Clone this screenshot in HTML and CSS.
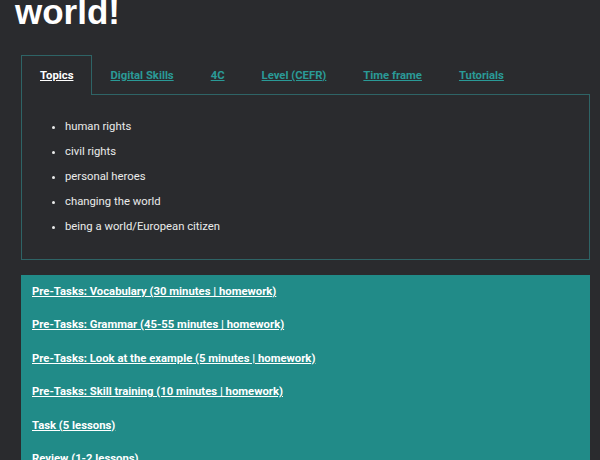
FILE: index.html
```html
<!DOCTYPE html>
<html>
<head>
<meta charset="utf-8">
<link rel="stylesheet" href="styles.css">
</head>
<body>
<div class="page">
  <h1 class="title">world!</h1>
  <div class="tabs">
    <ul class="tab-nav">
      <li class="tab active"><a href="#">Topics</a></li>
      <li class="tab"><a href="#">Digital Skills</a></li>
      <li class="tab"><a href="#">4C</a></li>
      <li class="tab"><a href="#">Level (CEFR)</a></li>
      <li class="tab"><a href="#">Time frame</a></li>
      <li class="tab"><a href="#">Tutorials</a></li>
    </ul>
    <div class="tab-panel">
      <ul class="topics">
        <li>human rights</li>
        <li>civil rights</li>
        <li>personal heroes</li>
        <li>changing the world</li>
        <li>being a world/European citizen</li>
      </ul>
    </div>
  </div>
  <div class="steps">
    <a href="#">Pre-Tasks: Vocabulary (30 minutes | homework)</a>
    <a href="#">Pre-Tasks: Grammar (45-55 minutes | homework)</a>
    <a href="#">Pre-Tasks: Look at the example (5 minutes | homework)</a>
    <a href="#">Pre-Tasks: Skill training (10 minutes | homework)</a>
    <a href="#">Task (5 lessons)</a>
    <a href="#">Review (1-2 lessons)</a>
  </div>
</div>
</body>
</html>
```
FILE: styles.css
```css
html, body {
  margin: 0;
  padding: 0;
  background: #2a2b2e;
  height: 100%;
  overflow: hidden;
}
body {
  font-family: Roboto, "Liberation Sans", sans-serif;
  color: #ebebeb;
}
.page {
  padding: 0 10px 0 21px;
}
.title {
  font-family: "Liberation Sans", Arial, sans-serif;
  font-size: 35px;
  line-height: 40px;
  font-weight: bold;
  color: #ffffff;
  margin: -8px 0 23px -6px;
}
.tab-nav {
  list-style: none;
  margin: 0;
  padding: 0;
  display: flex;
  border-bottom: 1px solid #2e6466;
}
.tab {
  height: 39px;
  display: flex;
  align-items: center;
  padding: 0 17.5px;
  border: 1px solid transparent;
  border-bottom: none;
  margin-bottom: -1px;
}
.tab a {
  font-size: 11.3px;
  font-weight: bold;
  color: #2a9a97;
  text-decoration: underline;
}
.tab.active {
  border-color: #2e6466;
  background: #2a2b2e;
  padding-left: 18px;
}
.tab.active a {
  color: #ffffff;
}
.tab-panel {
  border: 1px solid #2e6466;
  border-top: none;
  height: 165px;
  box-sizing: border-box;
  padding-top: 19px;
}
.topics {
  margin: 0;
  padding-left: 43px;
  font-size: 11.3px;
}
.topics li {
  line-height: 25px;
}
.steps {
  margin-top: 15px;
  background: #218b88;
  padding: 8px 11px;
  display: flex;
  flex-direction: column;
  align-items: flex-start;
}
.steps a {
  color: #ffffff;
  font-size: 11.3px;
  font-weight: bold;
  text-decoration: underline;
  line-height: 17px;
  margin-bottom: 16.4px;
}
```
